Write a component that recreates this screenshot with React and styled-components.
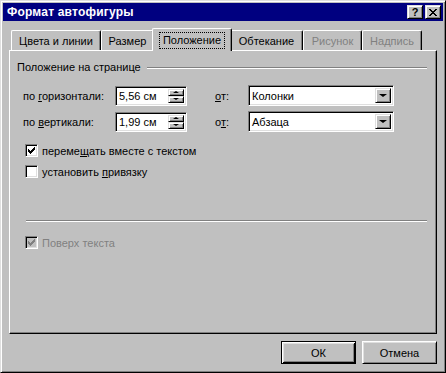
import React from 'react';
import styled, { createGlobalStyle, css } from 'styled-components';

const GlobalStyle = createGlobalStyle`
  html, body {
    margin: 0;
    padding: 0;
    background: #c0c0c0;
  }
  * { box-sizing: border-box; }
`;

const raised = css`
  background: #c0c0c0;
  border: 1px solid;
  border-color: #dfdfdf #000 #000 #dfdfdf;
  box-shadow: inset 1px 1px #fff, inset -1px -1px #808080;
`;

const sunken = css`
  border: 1px solid;
  border-color: #808080 #fff #fff #808080;
  box-shadow: inset 1px 1px #000, inset -1px -1px #dfdfdf;
`;

const Window = styled.div`
  width: 446px;
  height: 373px;
  background: #c0c0c0;
  border: 1px solid;
  border-color: #dfdfdf #000 #000 #dfdfdf;
  box-shadow: inset 1px 1px #fff, inset -1px -1px #808080;
  padding: 2px;
  display: flex;
  flex-direction: column;
  font-family: "Liberation Sans", Arial, sans-serif;
  font-size: 11px;
  color: #000;
`;

const TitleBar = styled.div`
  height: 18px;
  background: #000080;
  display: flex;
  align-items: center;
  padding: 0 2px 0 4px;
`;

const Title = styled.div`
  flex: 1;
  color: #fff;
  font-weight: bold;
  font-size: 12px;
  letter-spacing: 0.2px;
`;

const TitleButton = styled.div`
  ${raised};
  width: 16px;
  height: 14px;
  margin-left: 2px;
  display: flex;
  align-items: center;
  justify-content: center;
  font-weight: bold;
  font-size: 11px;
  line-height: 1;
`;

const Body = styled.div`
  flex: 1;
  display: flex;
  flex-direction: column;
  padding: 7px 6px 6px 6px;
`;

const TabRow = styled.div`
  height: 22px;
  display: flex;
  align-items: flex-end;
  padding-left: 2px;
`;

const Tab = styled.div`
  width: ${p => (p.$active ? p.$w + 4 : p.$w)}px;
  height: ${p => (p.$active ? 23 : 20)}px;
  margin: ${p => (p.$active ? '0 -2px -1px -2px' : '0')};
  position: relative;
  z-index: ${p => (p.$active ? 1 : 0)};
  background: #c0c0c0;
  border-top: 1px solid #fff;
  border-left: 1px solid #fff;
  border-right: 1px solid #000;
  border-radius: 2px 2px 0 0;
  box-shadow: inset -1px 0 #808080;
  display: flex;
  justify-content: center;
  align-items: flex-start;
  padding-top: 4px;
  line-height: 13px;
  color: ${p => (p.$disabled ? '#808080' : '#000')};
  white-space: nowrap;
`;

const Focus = styled.span`
  outline: 1px dotted #000;
  padding: 1px 3px;
`;

const Panel = styled.div`
  height: 284px;
  border-top: 1px solid #fff;
  border-left: 1px solid #fff;
  border-right: 1px solid #000;
  border-bottom: 1px solid #000;
  box-shadow: inset -1px -1px #808080;
  padding: 10px 9px 0 7px;
  display: flex;
  flex-direction: column;
`;

const SectionHeader = styled.div`
  height: 13px;
  display: flex;
  align-items: center;
  gap: 6px;
  line-height: 13px;
`;

const HeaderLine = styled.div`
  flex: 1;
  height: 2px;
  border-top: 1px solid #808080;
  border-bottom: 1px solid #fff;
`;

const Separator = styled.div`
  height: 2px;
  border-top: 1px solid #808080;
  border-bottom: 1px solid #fff;
  margin: 42px 0 0 9px;
`;

const Rows = styled.div`
  margin: 11px 0 0 6px;
  display: flex;
  flex-direction: column;
  gap: 5px;
`;

const Row = styled.div`
  height: 21px;
  display: flex;
  align-items: center;
`;

const Label = styled.div`
  width: ${p => p.$w}px;
  flex-shrink: 0;
`;

const Field = styled.div`
  ${sunken};
  background: #fff;
  width: ${p => p.$w}px;
  height: ${p => p.$h}px;
  display: flex;
  align-items: stretch;
  padding: 2px;
`;

const FieldText = styled.div`
  flex: 1;
  padding-left: 1px;
  display: flex;
  align-items: center;
`;

const Spinner = styled.div`
  width: 16px;
  display: flex;
  flex-direction: column;
`;

const SpinButton = styled.div`
  ${raised};
  flex: 1;
  display: flex;
  align-items: center;
  justify-content: center;
`;

const Arrow = styled.div`
  width: 0;
  height: 0;
  border-left: ${p => p.$size}px solid transparent;
  border-right: ${p => p.$size}px solid transparent;
  ${p => (p.$up
    ? `border-bottom: ${p.$size - 1}px solid #000;`
    : `border-top: ${p.$size - 1}px solid #000;`)}
`;

const DropButton = styled.div`
  ${raised};
  width: 16px;
  display: flex;
  align-items: center;
  justify-content: center;
`;

const CheckRow = styled.div`
  height: 13px;
  margin: ${p => p.$top}px 0 0 8px;
  display: flex;
  align-items: center;
  gap: 4px;
  color: ${p => (p.$disabled ? '#808080' : '#000')};
`;

const Box = styled.div`
  ${sunken};
  width: 13px;
  height: 13px;
  background: ${p => (p.$disabled ? '#c0c0c0' : '#fff')};
  display: flex;
  align-items: center;
  justify-content: center;
`;

const Footer = styled.div`
  margin-top: 7px;
  display: flex;
  justify-content: flex-end;
  gap: 6px;
`;

const Button = styled.div`
  width: 75px;
  height: 23px;
  display: flex;
  align-items: center;
  justify-content: center;
  background: #c0c0c0;
  border: 1px solid;
  ${p => (p.$default
    ? css`
        border-color: #000;
        box-shadow: inset 1px 1px #fff, inset -1px -1px #000, inset 2px 2px #dfdfdf, inset -2px -2px #808080;
      `
    : css`
        border-color: #fff #000 #000 #fff;
        box-shadow: inset 1px 1px #dfdfdf, inset -1px -1px #808080;
      `)}
`;

const U = styled.span`
  text-decoration: underline;
`;

const Check = ({ color }) => (
  <svg width="7" height="7" viewBox="0 0 7 7" shapeRendering="crispEdges">
    {[2, 3, 4, 3, 2, 1, 0].map((y, x) => (
      <rect key={x} x={x} y={y} width="1" height="3" fill={color} />
    ))}
  </svg>
);

const CheckBox = ({ checked, disabled, top, children }) => (
  <CheckRow $top={top} $disabled={disabled}>
    <Box $disabled={disabled}>{checked && <Check color={disabled ? '#808080' : '#000'} />}</Box>
    <span>{children}</span>
  </CheckRow>
);

const SpinField = ({ value }) => (
  <Field $w={72} $h={20}>
    <FieldText>{value}</FieldText>
    <Spinner>
      <SpinButton><Arrow $up $size={3} /></SpinButton>
      <SpinButton><Arrow $size={3} /></SpinButton>
    </Spinner>
  </Field>
);

const Combo = ({ value }) => (
  <Field $w={146} $h={21}>
    <FieldText>{value}</FieldText>
    <DropButton><Arrow $size={4} /></DropButton>
  </Field>
);

const tabs = [
  { label: 'Цвета и линии', w: 90 },
  { label: 'Размер', w: 53 },
  { label: 'Положение', w: 76, active: true },
  { label: 'Обтекание', w: 73 },
  { label: 'Рисунок', w: 59, disabled: true },
  { label: 'Надпись', w: 60, disabled: true },
];

export default function App() {
  return (
    <>
      <GlobalStyle />
      <Window>
        <TitleBar>
          <Title>Формат автофигуры</Title>
          <TitleButton>?</TitleButton>
          <TitleButton>
            <svg width="8" height="7" viewBox="0 0 8 7" shapeRendering="crispEdges">
              <path d="M0 0h2v1h-2zM6 0h2v1h-2zM1 1h2v1h-2zM5 1h2v1h-2zM2 2h4v1h-4zM3 3h2v1h-2zM2 4h4v1h-4zM1 5h2v1h-2zM5 5h2v1h-2zM0 6h2v1h-2zM6 6h2v1h-2z" fill="#000" />
            </svg>
          </TitleButton>
        </TitleBar>
        <Body>
          <TabRow>
            {tabs.map(t => (
              <Tab key={t.label} $w={t.w} $active={t.active} $disabled={t.disabled}>
                {t.active ? <Focus>{t.label}</Focus> : t.label}
              </Tab>
            ))}
          </TabRow>
          <Panel>
            <SectionHeader>
              <span>Положение на странице</span>
              <HeaderLine />
            </SectionHeader>
            <Rows>
              <Row>
                <Label $w={92}>по <U>г</U>оризонтали:</Label>
                <SpinField value="5,56 см" />
                <Label $w={28} />
                <Label $w={33}><U>о</U>т:</Label>
                <Combo value="Колонки" />
              </Row>
              <Row>
                <Label $w={92}>по <U>в</U>ертикали:</Label>
                <SpinField value="1,99 см" />
                <Label $w={28} />
                <Label $w={33}>о<U>т</U>:</Label>
                <Combo value="Абзаца" />
              </Row>
            </Rows>
            <CheckBox checked top={12}>переме<U>щ</U>ать вместе с текстом</CheckBox>
            <CheckBox top={8}>установить <U>п</U>ривязку</CheckBox>
            <Separator />
            <CheckBox checked disabled top={14}>Поверх текста</CheckBox>
          </Panel>
          <Footer>
            <Button $default>ОК</Button>
            <Button>Отмена</Button>
          </Footer>
        </Body>
      </Window>
    </>
  );
}
